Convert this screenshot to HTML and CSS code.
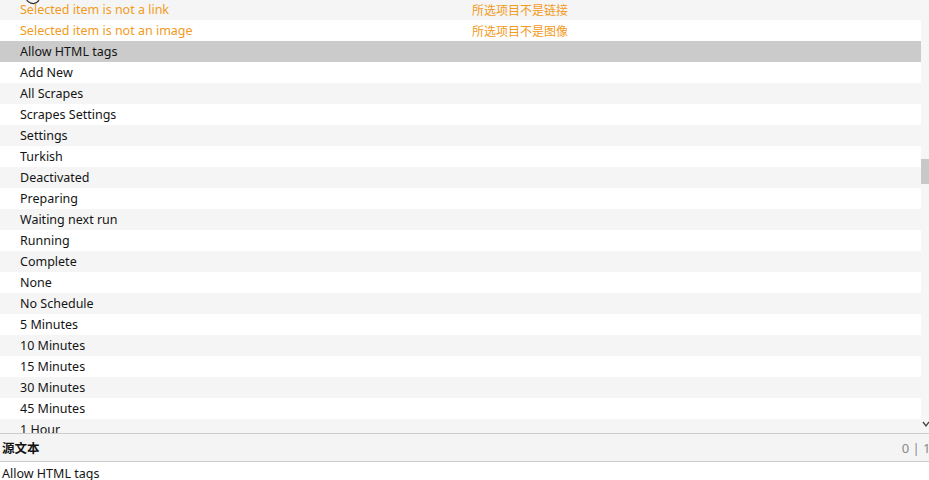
FILE: index.html
```html
<!DOCTYPE html>
<html lang="zh">
<head>
<meta charset="utf-8">
<title>Strings</title>
<link rel="stylesheet" href="styles.css">
</head>
<body>
<div class="list">
  <div class="rows">
    <div class="row odd warn"><span class="src">Selected item is not a link</span><span class="dst">所选项目不是链接</span></div>
    <div class="row warn"><span class="src">Selected item is not an image</span><span class="dst">所选项目不是图像</span></div>
    <div class="row selected"><span class="src">Allow HTML tags</span><span class="dst"></span></div>
    <div class="row"><span class="src">Add New</span><span class="dst"></span></div>
    <div class="row odd"><span class="src">All Scrapes</span><span class="dst"></span></div>
    <div class="row"><span class="src">Scrapes Settings</span><span class="dst"></span></div>
    <div class="row odd"><span class="src">Settings</span><span class="dst"></span></div>
    <div class="row"><span class="src">Turkish</span><span class="dst"></span></div>
    <div class="row odd"><span class="src">Deactivated</span><span class="dst"></span></div>
    <div class="row"><span class="src">Preparing</span><span class="dst"></span></div>
    <div class="row odd"><span class="src">Waiting next run</span><span class="dst"></span></div>
    <div class="row"><span class="src">Running</span><span class="dst"></span></div>
    <div class="row odd"><span class="src">Complete</span><span class="dst"></span></div>
    <div class="row"><span class="src">None</span><span class="dst"></span></div>
    <div class="row odd"><span class="src">No Schedule</span><span class="dst"></span></div>
    <div class="row"><span class="src">5 Minutes</span><span class="dst"></span></div>
    <div class="row odd"><span class="src">10 Minutes</span><span class="dst"></span></div>
    <div class="row"><span class="src">15 Minutes</span><span class="dst"></span></div>
    <div class="row odd"><span class="src">30 Minutes</span><span class="dst"></span></div>
    <div class="row"><span class="src">45 Minutes</span><span class="dst"></span></div>
    <div class="row odd"><span class="src">1 Hour</span><span class="dst"></span></div>
  </div>
  <div class="scrollbar">
    <div class="thumb"></div>
    <svg class="chev" width="7" height="8" viewBox="0 0 7 8"><path d="M1 2 L4 6 L7 2" fill="none" stroke="#444" stroke-width="1.3"/></svg>
  </div>
  <svg class="cursor" width="20" height="8" viewBox="0 0 20 8"><path d="M2 -4 A7 7 0 0 0 15 0" fill="none" stroke="#333" stroke-width="1.2"/></svg>
</div>
<div class="panel-head">
  <span class="title">源文本</span>
  <span class="counter">0 | 15</span>
</div>
<div class="panel-body">Allow HTML tags</div>
</body>
</html>
```
FILE: styles.css
```css
html, body {
  margin: 0;
  padding: 0;
  background: #fff;
}
body {
  font-family: "Noto Sans", "Noto Sans CJK SC", sans-serif;
  font-size: 12.5px;
  color: #141414;
  width: 929px;
  height: 480px;
  overflow: hidden;
}
.list {
  position: relative;
  display: flex;
  height: 433px;
  overflow: hidden;
}
.rows {
  flex: 1;
  margin-top: -1px;
}
.row {
  display: grid;
  grid-template-columns: 452px 1fr;
  height: 21px;
  line-height: 21px;
  padding-left: 20px;
  white-space: nowrap;
  background: #fff;
}
.row.odd {
  background: #f5f5f5;
}
.row.selected {
  background: #cbcbcb;
}
.row.warn {
  color: #f29a1c;
}
.dst {
  font-family: "Noto Sans CJK SC", sans-serif;
  font-size: 12px;
}
.scrollbar {
  position: relative;
  width: 8px;
  background: #f6f6f6;
}
.thumb {
  margin-top: 159px;
  height: 25px;
  background: #c8c8c8;
}
.chev {
  position: absolute;
  left: 1px;
  bottom: 5px;
}
.cursor {
  position: absolute;
  left: 24px;
  top: 0;
}
.panel-head {
  display: flex;
  align-items: center;
  height: 27px;
  background: #f4f4f4;
  border-top: 1px solid #cccccc;
  border-bottom: 1px solid #cccccc;
  padding-left: 2px;
  white-space: nowrap;
  overflow: hidden;
}
.title {
  font-weight: bold;
  color: #111;
  font-family: "Noto Sans CJK SC", sans-serif;
  font-size: 12.5px;
}
.counter {
  margin-left: auto;
  margin-right: -9px;
  font-size: 13px;
  color: #888;
}
.panel-body {
  padding-left: 2px;
  height: 18px;
  line-height: 23px;
}
```
